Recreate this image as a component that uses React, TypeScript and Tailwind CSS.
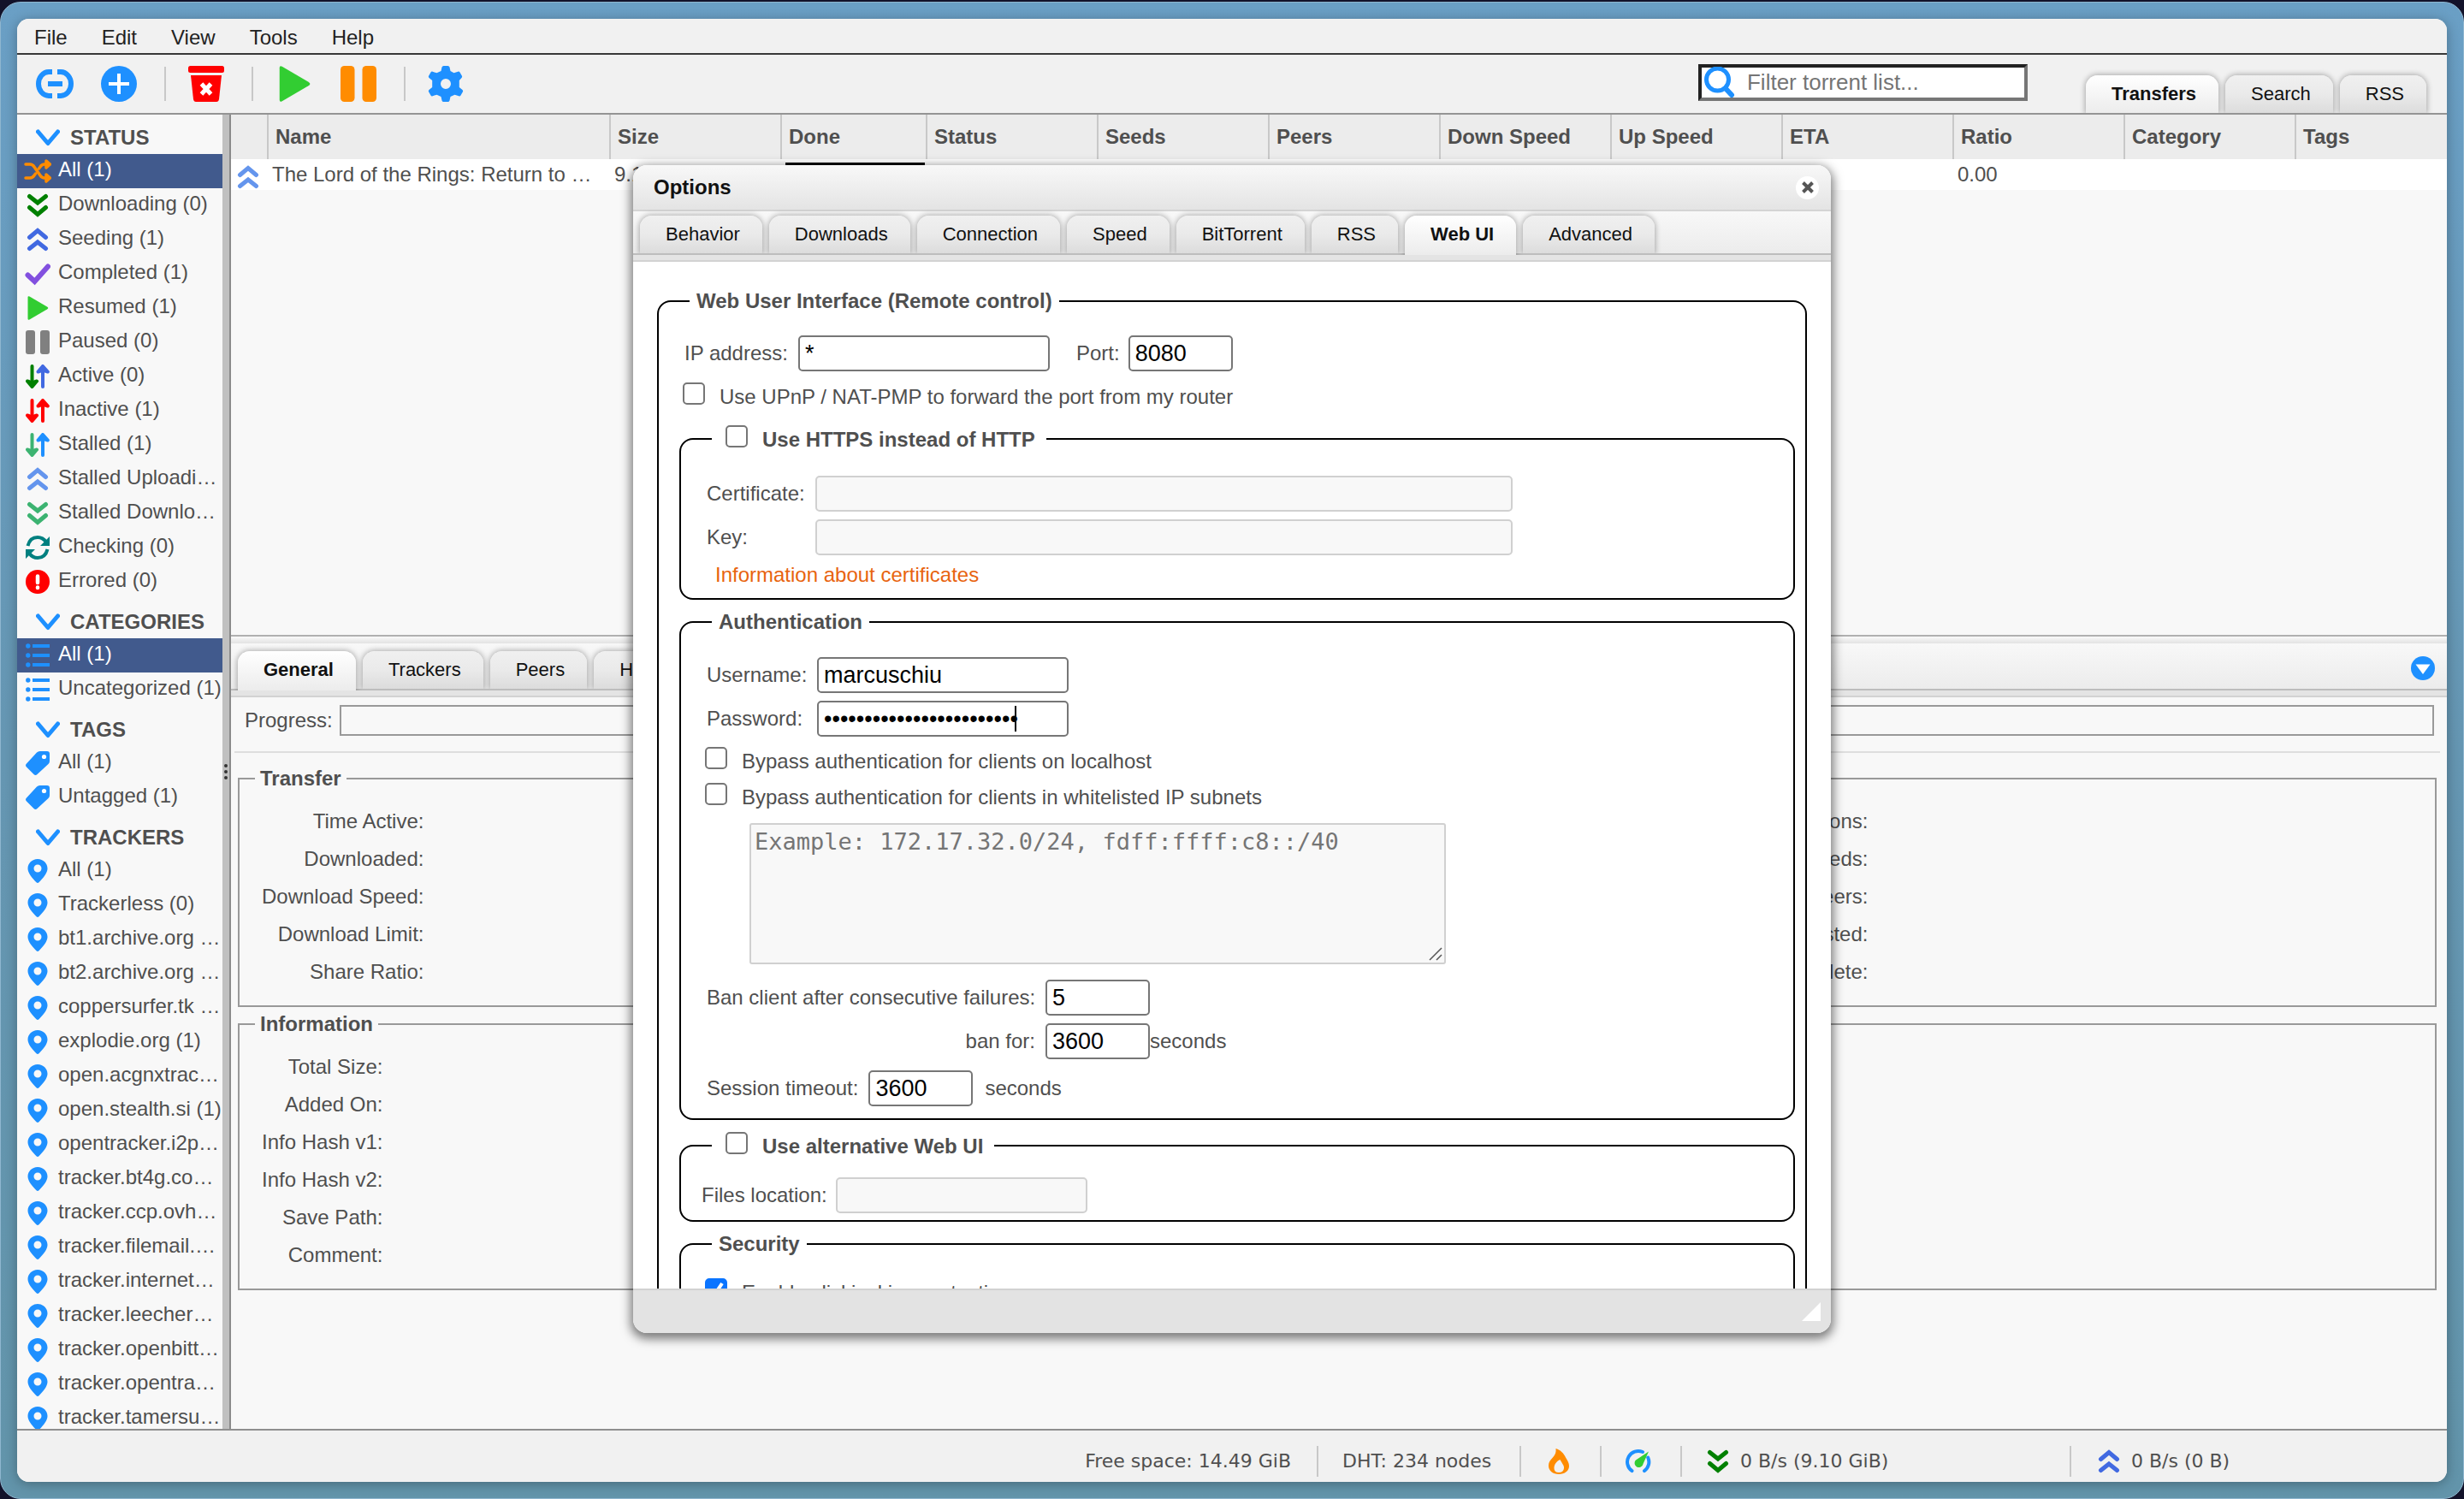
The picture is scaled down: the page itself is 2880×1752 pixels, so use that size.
import type { ReactNode } from "react";

type IconProps = { className?: string };

function DoubleDown({ className }: IconProps) {
  return (
    <svg viewBox="0 0 28 28" className={className} fill="none" stroke="currentColor" strokeWidth="5" strokeLinecap="round">
      <path d="M4.5 3.5 14 11l9.500-7.500M4.500 16.500 14 24.500l9.500-8" />
    </svg>
  );
}

function DoubleUp({ className }: IconProps) {
  return (
    <svg viewBox="0 0 28 28" className={className} fill="none" stroke="currentColor" strokeWidth="5" strokeLinecap="round">
      <path d="M4.500 11.500 14 3.500l9.500 8M4.500 24.500 14 17l9.500 7.500" />
    </svg>
  );
}

function Chevron() {
  return (
    <svg viewBox="0 0 28 20" className="h-5 w-7 shrink-0" fill="none" stroke="#1e90ff" strokeWidth="5" strokeLinecap="round" strokeLinejoin="round">
      <path d="M2.500 3 14 16.500 25.500 3" />
    </svg>
  );
}

function Play({ className }: IconProps) {
  return (
    <svg viewBox="0 0 28 28" className={className} fill="#32cd32">
      <path d="M2.500 1.500Q2.500-.5 4.500.5L25 12.500q2.500 1.500 0 3L4.500 27.500q-2 1-2-1z" />
    </svg>
  );
}

function Pause({ className }: IconProps) {
  return (
    <svg viewBox="0 0 28 28" className={className} fill="currentColor">
      <rect x="0" y="0" width="11" height="28" rx="3" />
      <rect x="17" y="0" width="11" height="28" rx="3" />
    </svg>
  );
}

function Arrows({ down, up }: { down: string; up: string }) {
  return (
    <svg viewBox="0 0 28 28" className="size-7" fill="none" strokeWidth="4" strokeLinecap="round" strokeLinejoin="round">
      <path stroke={down} d="M7.500 2v22" />
      <path stroke={down} fill={down} d="M2 19.500 7.500 26l5.500-6.500-5.500 2z" />
      <path stroke={up} d="M20 26V4" />
      <path stroke={up} fill={up} d="M14.500 8.500 20 2l5.800 6.500L20 6.500z" />
    </svg>
  );
}

function Shuffle() {
  return (
    <svg viewBox="0 0 32 28" className="h-7 w-8" fill="none" stroke="#ff8c00" strokeWidth="3.500" strokeLinecap="round" strokeLinejoin="round">
      <path d="M2 6h5q3 0 5 3l7 10q2 3 5 3h4M2 22h5q3 0 5-3l1.500-2M17.500 11l1.500-2q2-3 5-3h4" />
      <path fill="#ff8c00" d="m26 2 4.500 4-4.500 4zM26 18l4.500 4-4.500 4z" />
    </svg>
  );
}

function Check() {
  return (
    <svg viewBox="0 0 30 28" className="h-7 w-[30px]" fill="none" stroke="#8250df" strokeWidth="6" strokeLinecap="round">
      <path d="m3.500 15.500 8 7.500L27 5.500" />
    </svg>
  );
}

function Refresh() {
  return (
    <svg viewBox="0 0 28 28" className="size-7" fill="none" stroke="#008080" strokeWidth="4">
      <path d="M2.500 12Q5 2 14 2q6 0 10 5.500M25.500 16Q23 26 14 26q-6 0-10-5.500" />
      <path fill="#008080" stroke="none" d="M28 1v11H17zM0 27V16h11z" />
    </svg>
  );
}

function ErrorMark() {
  return (
    <svg viewBox="0 0 28 28" className="size-7">
      <circle cx="14" cy="14" r="14" fill="#f00" />
      <path d="M14 7.500v7.500M14 20.500v.5" stroke="#fff" strokeWidth="4.500" strokeLinecap="round" />
    </svg>
  );
}

function ListIcon() {
  return (
    <svg viewBox="0 0 28 28" className="size-7" stroke="#1e90ff" fill="#1e90ff" strokeWidth="4">
      <path d="M8 3h20M8 14h20M8 25h20" />
      <g stroke="none">
        <circle cx="2.800" cy="3" r="2.700" />
        <circle cx="2.800" cy="14" r="2.700" />
        <circle cx="2.800" cy="25" r="2.700" />
      </g>
    </svg>
  );
}

function Tag() {
  return (
    <svg viewBox="0 0 28 28" className="size-7">
      <path fill="#1e90ff" d="M13 1.500Q14.500 0 16.500 0H25q3 0 3 3v8.500q0 2-1.500 3.500L13.500 27q-2 2-4 0L1 18.500q-2-2 0-4z" />
      <circle cx="21.500" cy="6.500" r="2.600" fill="#fff" />
    </svg>
  );
}

function Pin() {
  return (
    <svg viewBox="0 0 28 28" className="size-7">
      <path fill="#1e90ff" fillRule="evenodd" d="M14 0C7.500 0 2.500 5 2.500 11c0 5.500 5 11 10 16.300q1.500 1.400 3 0c5-5.300 10-10.800 10-16.300C25.500 5 20.500 0 14 0zm0 6.500a4.500 4.500 0 1 1 0 9 4.500 4.500 0 0 1 0-9z" />
    </svg>
  );
}

function LinkIcon() {
  return (
    <svg viewBox="0 0 44 44" className="size-11" fill="none" stroke="#1e90ff" strokeWidth="6">
      <path d="M19 8h-4a12 14 0 0 0 0 28h4M25 8h4a12 14 0 0 1 0 28h-4" />
      <path d="M14 22h17" />
    </svg>
  );
}

function AddIcon() {
  return (
    <svg viewBox="0 0 42 42" className="size-[42px]">
      <circle cx="21" cy="21" r="21" fill="#1e90ff" />
      <path d="M21 9v24M9 21h24" stroke="#fff" strokeWidth="4" />
    </svg>
  );
}

function TrashIcon() {
  return (
    <svg viewBox="0 0 42 42" className="size-[42px]">
      <rect width="42" height="8" rx="2.500" fill="#f00" />
      <path fill="#f00" d="M3 11h36l-3 28q-.5 3-3 3H9q-2.500 0-3-3z" />
      <path d="m15.500 21 11 12M26.500 21l-11 12" stroke="#fff" strokeWidth="5" />
    </svg>
  );
}

function GearIcon() {
  return (
    <svg viewBox="0 0 42 42" className="size-[42px]">
      <path
        fill="#1e90ff"
        fillRule="evenodd"
        d="M16.500 1.500Q17 0 18.500 0h5Q25 0 25.500 1.500l1 4.500 4 2.300 4.800-1.600q1.500-.4 2.200.8l2.300 4q.8 1.300-.3 2.400L36.800 17v8l3.700 3.100q1.100 1.100.3 2.400l-2.300 4q-.7 1.200-2.200.8L31.500 33.700l-5 2.300-1 4.500Q25 42 23.500 42h-5q-1.500 0-2-1.500l-1-4.500-5-2.300-4.800 1.600q-1.500.4-2.200-.8l-2.300-4q-.8-1.300.3-2.400L5.200 25v-8l-3.700-3.100Q.4 12.800 1.200 11.500l2.300-4q.7-1.200 2.200-.8l4.800 1.600 5-2.300zM21 15a6 6 0 1 0 0 12 6 6 0 0 0 0-12z"
      />
    </svg>
  );
}

function SearchIcon() {
  return (
    <svg viewBox="0 0 36 36" className="size-9 shrink-0" fill="none" stroke="#1e90ff" strokeLinecap="round">
      <circle cx="15.500" cy="15" r="13" strokeWidth="5" />
      <path d="m25 25.500 7 7.500" strokeWidth="6" />
    </svg>
  );
}

function Flame() {
  return (
    <svg viewBox="0 0 24 30" className="h-[30px] w-6">
      <path
        fill="#ff8c00"
        fillRule="evenodd"
        d="M8.500 0C14 1.500 18 6 20 10.500c2.500 4 4 6.500 4 10C24 26 19 30 12 30S0 26 0 20c0-4 2-6.500 4.500-9C8 7.500 9 4 8.500 0zM13.500 13C9 15 6.500 19 6.500 23q0 5 5.500 5t6-5c.5-3-2.500-6-4.500-10z"
      />
    </svg>
  );
}

function Gauge() {
  return (
    <svg viewBox="0 0 30 30" className="size-[30px]">
      <path
        d="M7.500 26.200A12.800 12.800 0 0 1 20 4M26.200 10.500A12.800 12.800 0 0 1 22 26.200"
        fill="none"
        stroke="#1e90ff"
        strokeWidth="4"
        strokeLinecap="round"
      />
      <path d="M27 3.500 20.500 18a5 5 0 1 1-7-5.500z" fill="#32cd32" />
    </svg>
  );
}

type Filter = { label: string; icon: ReactNode; selected?: boolean };

const statusFilters: Filter[] = [
  { label: "All (1)", icon: <Shuffle />, selected: true },
  { label: "Downloading (0)", icon: <DoubleDown className="size-7 text-[#008000]" /> },
  { label: "Seeding (1)", icon: <DoubleUp className="size-7 text-[#4169e1]" /> },
  { label: "Completed (1)", icon: <Check /> },
  { label: "Resumed (1)", icon: <Play className="size-7" /> },
  { label: "Paused (0)", icon: <Pause className="size-7 text-[#808080]" /> },
  { label: "Active (0)", icon: <Arrows down="#008000" up="#4169e1" /> },
  { label: "Inactive (1)", icon: <Arrows down="#ff0000" up="#ff0000" /> },
  { label: "Stalled (1)", icon: <Arrows down="#3cb371" up="#1e90ff" /> },
  { label: "Stalled Uploadi…", icon: <DoubleUp className="size-7 text-[#6495ed]" /> },
  { label: "Stalled Downlo…", icon: <DoubleDown className="size-7 text-[#3cb371]" /> },
  { label: "Checking (0)", icon: <Refresh /> },
  { label: "Errored (0)", icon: <ErrorMark /> },
];

const categories: Filter[] = [
  { label: "All (1)", icon: <ListIcon />, selected: true },
  { label: "Uncategorized (1)", icon: <ListIcon /> },
];

const tags: Filter[] = [
  { label: "All (1)", icon: <Tag /> },
  { label: "Untagged (1)", icon: <Tag /> },
];

const trackers: Filter[] = [
  "All (1)",
  "Trackerless (0)",
  "bt1.archive.org …",
  "bt2.archive.org …",
  "coppersurfer.tk …",
  "explodie.org (1)",
  "open.acgnxtrac…",
  "open.stealth.si (1)",
  "opentracker.i2p…",
  "tracker.bt4g.co…",
  "tracker.ccp.ovh…",
  "tracker.filemail.…",
  "tracker.internet…",
  "tracker.leecher…",
  "tracker.openbitt…",
  "tracker.opentra…",
  "tracker.tamersu…",
].map((label) => ({ label, icon: <Pin /> }));

const columns = [
  { label: "", width: "w-[43px]" },
  { label: "Name", width: "w-[400px]" },
  { label: "Size", width: "w-[200px]" },
  { label: "Done", width: "w-[170px]" },
  { label: "Status", width: "w-[200px]" },
  { label: "Seeds", width: "w-[200px]" },
  { label: "Peers", width: "w-[200px]" },
  { label: "Down Speed", width: "w-[200px]" },
  { label: "Up Speed", width: "w-[200px]" },
  { label: "ETA", width: "w-[200px]" },
  { label: "Ratio", width: "w-[200px]" },
  { label: "Category", width: "w-[200px]" },
  { label: "Tags", width: "" },
];

function FilterGroup({ title, items }: { title: string; items: Filter[] }) {
  return (
    <section>
      <h2 className="flex h-[46px] items-center gap-3 pt-2 pl-[22px] font-bold">
        <Chevron />
        {title}
      </h2>
      <ul>
        {items.map((item) => (
          <li key={item.label}>
            <a
              href="#"
              className={`flex h-10 items-center overflow-hidden whitespace-nowrap ${item.selected ? "bg-[#415a8d] text-white" : ""}`}
            >
              <span className="flex w-12 shrink-0 justify-center">{item.icon}</span>
              <span className="pb-1">{item.label}</span>
            </a>
          </li>
        ))}
      </ul>
    </section>
  );
}

function Tab({ label, active, joined }: { label: string; active?: boolean; joined?: boolean }) {
  const look = active
    ? "bg-linear-to-b from-white to-[#ececec] font-bold"
    : "bg-linear-to-b from-[#f0f0f0] via-[#eaeaea] to-[#dcdcdc]";
  return (
    <button
      type="button"
      className={`rounded-t-[14px] pr-[26px] pl-[30px] text-[22px] leading-7 whitespace-nowrap text-[#111] shadow-[0_0_6px_1px_rgba(0,0,0,0.3)] [clip-path:inset(-8px_-8px_0_-8px)] ${look} ${active && joined ? "relative -mb-0.5 h-[46px] pb-0.5" : "h-11"}`}
    >
      {label}
    </button>
  );
}

function TabBar({ tabs, active, className, children }: { tabs: string[]; active: string; className: string; children?: ReactNode }) {
  return (
    <div>
      <nav className={`flex items-end border-b-2 border-[#bdbdbd] bg-linear-to-b from-[#f8f8f8] to-[#ececec] px-2 ${className}`}>
        {tabs.map((t) => (
          <Tab key={t} label={t} active={t === active} joined />
        ))}
        {children}
      </nav>
      <div className="h-2 border-b-2 border-[#d2d2d2] bg-[#e4e4e4]" />
    </div>
  );
}

function TextField({ id, className = "", disabled, value, type = "text" }: { id: string; className?: string; disabled?: boolean; value?: string; type?: string }) {
  return (
    <input
      id={id}
      type={type}
      disabled={disabled}
      defaultValue={value}
      className={`h-[42px] rounded-[5px] border-2 px-1.5 text-[27px] text-black ${disabled ? "border-[#d0d0d0] bg-[#f8f8f8]" : "border-[#767676] bg-white"} ${className}`}
    />
  );
}

function Tick({ id, checked }: { id: string; checked?: boolean }) {
  return (
    <span className="relative flex size-[26px] shrink-0">
      <input
        id={id}
        type="checkbox"
        defaultChecked={checked}
        className="size-[26px] appearance-none rounded-[5px] border-2 border-[#767676] bg-white checked:border-[#0a74ff] checked:bg-[#0a74ff]"
      />
      {checked && (
        <svg viewBox="0 0 26 26" className="pointer-events-none absolute inset-0" fill="none" stroke="#fff" strokeWidth="4">
          <path d="m6 14 5 5.500L20 6" />
        </svg>
      )}
    </span>
  );
}

function CheckRow({ id, label, checked, className = "" }: { id: string; label: string; checked?: boolean; className?: string }) {
  return (
    <div className={`flex items-start gap-[17px] ${className}`}>
      <Tick id={id} checked={checked} />
      <label htmlFor={id} className="mt-[3px]">
        {label}
      </label>
    </div>
  );
}

function Group({ title, check, className = "", body, children }: { title: string; check?: string; className?: string; body: string; children: ReactNode }) {
  return (
    <fieldset className={`rounded-2xl border-2 border-black ${className}`}>
      {check ? (
        <legend className="ml-9 pr-[13px] pl-4 font-bold">
          <CheckRow id={check} label={title} />
        </legend>
      ) : (
        <legend className="ml-9 px-2 font-bold">{title}</legend>
      )}
      <div className={body}>{children}</div>
    </fieldset>
  );
}

function OptionsDialog() {
  return (
    <div
      role="dialog"
      aria-label="Options"
      className="absolute top-[171px] left-1/2 flex h-[1365px] w-[1400px] -translate-x-1/2 flex-col overflow-hidden rounded-2xl bg-white shadow-[0_4px_12px_3px_rgba(0,0,0,0.5)]"
    >
      <header className="flex h-[54px] shrink-0 items-center justify-between border-b-2 border-[#d4d4d4] bg-linear-to-b from-[#f8f8f8] to-[#e4e4e4] pr-3.5 pl-6">
        <h1 className="font-bold text-[#111]">Options</h1>
        <button type="button" aria-label="Close" className="flex size-[27px] items-center justify-center rounded-full bg-white">
          <svg viewBox="0 0 14 14" className="size-3.5" stroke="#555" strokeWidth="4">
            <path d="m1.500 1.500 11 11M12.500 1.500l-11 11" />
          </svg>
        </button>
      </header>
      <TabBar
        tabs={["Behavior", "Downloads", "Connection", "Speed", "BitTorrent", "RSS", "Web UI", "Advanced"]}
        active="Web UI"
        className="gap-2 pt-[5px]"
      />
      <div className="min-h-0 flex-1 overflow-hidden px-7 pt-8">
        <Group title="Web User Interface (Remote control)" body="pr-3 pb-6 pl-6">
          <div className="flex items-center pt-[26px] pl-1.5">
            <label htmlFor="ip">IP address:</label>
            <TextField id="ip" value="*" className="ml-3 w-[294px]" />
            <label htmlFor="port" className="ml-[31px]">
              Port:
            </label>
            <TextField id="port" value="8080" className="ml-2.5 w-[122px]" />
          </div>
          <CheckRow id="upnp" label="Use UPnP / NAT-PMP to forward the port from my router" className="mt-[13px] pl-1" />

          <Group title="Use HTTPS instead of HTTP" check="https" className="mt-[19px]" body="pb-[13px] pl-[30px]">
            <div className="grid grid-cols-[127px_815px] items-center gap-y-[9px] pt-7">
              <label htmlFor="cert">Certificate:</label>
              <TextField id="cert" disabled />
              <label htmlFor="key">Key:</label>
              <TextField id="key" disabled />
            </div>
            <a href="#" className="mt-[9px] ml-2.5 block w-fit text-[#e8640f]">
              Information about certificates
            </a>
          </Group>

          <Group title="Authentication" className="mt-3" body="pb-3.5 pl-[30px]">
            <div className="grid grid-cols-[129px_294px] items-center gap-y-[9px] pt-[27px]">
              <label htmlFor="user">Username:</label>
              <TextField id="user" value="marcuschiu" />
              <label htmlFor="pass">Password:</label>
              <div className="relative flex">
                <TextField id="pass" type="password" value="correcthorsebatterystapl" className="w-full border-[#454545]" />
                <span className="absolute top-1.5 left-[231px] h-[30px] w-0.5 bg-black" />
              </div>
            </div>
            <CheckRow id="bypass-local" label="Bypass authentication for clients on localhost" className="mt-3 -ml-0.5" />
            <CheckRow id="bypass-subnet" label="Bypass authentication for clients in whitelisted IP subnets" className="mt-[11px] -ml-0.5" />
            <div className="relative mt-4 ml-[50px] w-[814px]">
              <textarea
                aria-label="Whitelisted IP subnets"
                disabled
                placeholder="Example: 172.17.32.0/24, fdff:ffff:c8::/40"
                className="block h-[165px] w-full resize-none rounded-[3px] border-2 border-[#d0d0d0] bg-[#f8f8f8] px-1 py-1 font-['DejaVu_Sans_Mono',monospace] text-[27px] leading-8 placeholder:text-[#757575]"
              />
              <svg viewBox="0 0 16 16" className="absolute right-1 bottom-1 size-4" stroke="#555" strokeWidth="1.500">
                <path d="M1 15 15 1M9 15l6-6" />
              </svg>
            </div>
            <div className="mt-[18px] grid w-fit grid-cols-[384px_134px_auto] items-center gap-y-[9px] whitespace-nowrap">
              <label htmlFor="failures">Ban client after consecutive failures:</label>
              <TextField id="failures" value="5" className="ml-3 w-[122px]" />
              <label htmlFor="ban" className="col-start-1 text-right">
                ban for:
              </label>
              <TextField id="ban" value="3600" className="ml-3 w-[122px]" />
              <span>seconds</span>
            </div>
            <div className="mt-[13px] flex items-center">
              <label htmlFor="timeout">Session timeout:</label>
              <TextField id="timeout" value="3600" className="ml-3 w-[122px]" />
              <span className="ml-3.5">seconds</span>
            </div>
          </Group>

          <Group title="Use alternative Web UI" check="alt-ui" className="mt-3.5" body="pb-2 pl-6">
            <div className="flex items-center pt-[22px]">
              <label htmlFor="files">Files location:</label>
              <TextField id="files" disabled className="ml-2.5 w-[294px]" />
            </div>
          </Group>

          <Group title="Security" className="mt-3" body="pb-6 pl-7">
            <CheckRow id="clickjack" label="Enable clickjacking protection" checked className="pt-[26px]" />
          </Group>
        </Group>
      </div>
      <footer className="flex h-[52px] shrink-0 items-end justify-end border-t-2 border-[#d2d2d2] bg-[#e3e3e3] pr-3 pb-3.5">
        <svg viewBox="0 0 22 22" className="size-[22px]">
          <path d="M22 0v22H0z" fill="#fff" />
        </svg>
      </footer>
    </div>
  );
}

function Labels({ items, className = "" }: { items: string[]; className?: string }) {
  return (
    <dl className={`w-fit text-right ${className}`}>
      {items.map((t) => (
        <dt key={t} className="h-11 whitespace-nowrap">
          {t}
        </dt>
      ))}
    </dl>
  );
}

function Details() {
  return (
    <div className="pr-2 pl-1">
      <div className="flex items-center gap-2 pt-[9px] pr-[7px] pl-3">
        <span id="progress-label">Progress:</span>
        <div role="progressbar" aria-labelledby="progress-label" className="h-9 flex-1 border-2 border-[#999]" />
      </div>
      <hr className="mt-[18px] border-t-2 border-[#dedede]" />
      <fieldset className="mt-4 mr-1 ml-1 border-2 border-[#999] pb-[9px] pl-6">
        <legend className="-ml-1.5 px-1.5 font-bold">Transfer</legend>
        <div className="grid grid-cols-3 pt-[22px] pl-0.5">
          <Labels items={["Time Active:", "Downloaded:", "Download Speed:", "Download Limit:", "Share Ratio:"]} />
          <Labels
            items={["Connections:", "Seeds:", "Peers:", "Wasted:", "Last Seen Complete:"]}
            className="col-start-3 -ml-10"
          />
        </div>
      </fieldset>
      <fieldset className="mt-1.5 mr-1 ml-1 border-2 border-[#999] pb-[9px] pl-6">
        <legend className="-ml-1.5 px-1.5 font-bold">Information</legend>
        <Labels
          items={["Total Size:", "Added On:", "Info Hash v1:", "Info Hash v2:", "Save Path:", "Comment:"]}
          className="pt-[22px] pl-0.5"
        />
      </fieldset>
    </div>
  );
}

function TorrentTable() {
  return (
    <table className="w-full table-fixed border-collapse text-left whitespace-nowrap">
      <thead className="bg-[#ececec]">
        <tr>
          {columns.map((c, i) => (
            <th
              key={c.label}
              className={`h-[52px] p-0 pl-2 font-bold ${c.width} ${i < columns.length - 1 ? "border-r-2 border-[#c8c8c8]" : ""}`}
            >
              {c.label}
            </th>
          ))}
        </tr>
      </thead>
      <tbody>
        <tr className="h-9 bg-white">
          <td className="p-0 pt-1.5 pl-1.5">
            <DoubleUp className="size-7 text-[#6495ed]" />
          </td>
          <td className="p-0 pl-[5px]">The Lord of the Rings: Return to …</td>
          <td className="p-0 pl-[5px]">9.10 GiB</td>
          <td className="p-0 pr-0.5 pl-[5px]">
            <div className="h-7 border-4 border-black bg-[#000040]" />
          </td>
          <td colSpan={6} />
          <td className="p-0 pl-[5px]">0.00</td>
          <td colSpan={2} />
        </tr>
      </tbody>
    </table>
  );
}

function StatusBar() {
  const cell = "flex h-9 items-center border-l-2 border-[#c8c8c8]";
  return (
    <footer className="flex h-[62px] shrink-0 items-center justify-end border-t-2 border-[#8f8f8f] bg-[#f1f1f1] pt-3 font-['DejaVu_Sans',sans-serif] text-[22px] whitespace-nowrap">
      <span className="pr-[30px]">Free space: 14.49 GiB</span>
      <span className={`${cell} w-[237px] pl-[28px]`}>DHT: 234 nodes</span>
      <span className={`${cell} w-[94px] pl-8`}>
        <Flame />
      </span>
      <span className={`${cell} w-[94px] pl-7`}>
        <Gauge />
      </span>
      <span className={`${cell} w-[455px] gap-3 pl-7`}>
        <DoubleDown className="size-7 text-[#008000]" />0 B/s (9.10 GiB)
      </span>
      <span className={`${cell} w-[441px] gap-3 pl-[30px]`}>
        <DoubleUp className="size-7 text-[#4169e1]" />0 B/s (0 B)
      </span>
    </footer>
  );
}

export default function App() {
  return (
    <div className="h-screen overflow-hidden bg-[#12122a] pt-0.5 font-['Liberation_Sans',Arial,sans-serif] text-2xl leading-7 text-[#4f4f4f]">
      <div className="h-full rounded-[24px] border border-[#8fb6cf] bg-linear-to-b from-[#6a9fc5] via-[#6596b2] to-[#6294aa] px-[19px] pt-[19px] pb-[19px]">
        <div className="relative flex h-full flex-col overflow-hidden rounded-[14px] bg-[#f8f8f8] shadow-[0_2px_14px_rgba(0,0,0,0.3)]">
          <nav className="flex h-[42px] shrink-0 gap-10 border-b-2 border-[#383838] bg-[#f1f1f1] pt-2 pl-5 text-[#222]">
            {["File", "Edit", "View", "Tools", "Help"].map((m) => (
              <a key={m} href="#">
                {m}
              </a>
            ))}
          </nav>

          <div className="flex h-[70px] shrink-0 items-center border-b-2 border-[#949494] bg-[#f1f1f1]">
            <button type="button" aria-label="Add torrent link" className="ml-[22px]">
              <LinkIcon />
            </button>
            <button type="button" aria-label="Add torrent file" className="ml-8">
              <AddIcon />
            </button>
            <span className="ml-8 h-10 w-0.5 bg-[#c8c8c8]" />
            <button type="button" aria-label="Delete" className="ml-[26px]">
              <TrashIcon />
            </button>
            <span className="ml-8 h-10 w-0.5 bg-[#c8c8c8]" />
            <button type="button" aria-label="Resume" className="ml-[27px]">
              <Play className="size-[42px]" />
            </button>
            <button type="button" aria-label="Pause" className="ml-[33px]">
              <Pause className="size-[42px] text-[#ff8c00]" />
            </button>
            <span className="ml-8 h-10 w-0.5 bg-[#c8c8c8]" />
            <button type="button" aria-label="Options" className="ml-[26px]">
              <GearIcon />
            </button>
            <div className="mr-[68px] mb-1 ml-auto flex h-[43px] w-[385px] items-center border-4 border-t-[#222] border-r-[#767676] border-b-[#767676] border-l-[#222] bg-white pl-[3px]">
              <SearchIcon />
              <input
                type="text"
                aria-label="Filter torrent list"
                placeholder="Filter torrent list..."
                className="ml-3.5 w-full min-w-0 text-[26px] outline-none placeholder:text-[#757575]"
              />
            </div>
            <nav className="flex gap-2 self-end pr-6">
              <Tab label="Transfers" active />
              <Tab label="Search" />
              <Tab label="RSS" />
            </nav>
          </div>

          <div className="flex min-h-0 flex-1">
            <aside className="w-60 shrink-0 overflow-hidden">
              <FilterGroup title="STATUS" items={statusFilters} />
              <FilterGroup title="CATEGORIES" items={categories} />
              <FilterGroup title="TAGS" items={tags} />
              <FilterGroup title="TRACKERS" items={trackers} />
            </aside>
            <div className="flex w-2.5 shrink-0 flex-col items-center justify-center border-r-2 border-[#8a8a8a] bg-[#c0c0c0]">
              <span className="h-[18px] border-l-4 border-dotted border-[#333]" />
            </div>
            <main className="min-w-0 flex-1 overflow-hidden">
              <div className="h-[608px]">
                <TorrentTable />
              </div>
              <div className="h-2.5 border-t-2 border-[#b0b0b0] bg-linear-to-b from-[#fafafa] to-[#e2e2e2]" />
              <TabBar tabs={["General", "Trackers", "Peers", "HTTP Sources", "Content"]} active="General" className="gap-2 pt-[9px]">
                <button type="button" aria-label="Collapse panel" className="mr-1.5 mb-2.5 ml-auto">
                  <svg viewBox="0 0 28 28" className="size-7">
                    <circle cx="14" cy="14" r="14" fill="#1e90ff" />
                    <path d="M5.500 9.500h17L14 21z" fill="#fff" />
                  </svg>
                </button>
              </TabBar>
              <Details />
            </main>
          </div>

          <StatusBar />
          <OptionsDialog />
        </div>
      </div>
    </div>
  );
}
